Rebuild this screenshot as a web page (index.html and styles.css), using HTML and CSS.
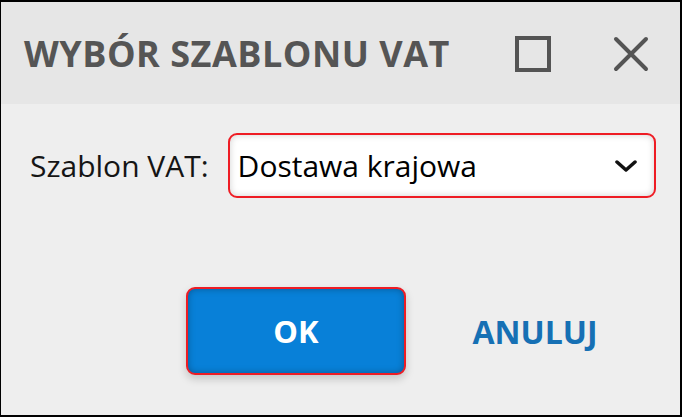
FILE: index.html
```html
<!DOCTYPE html>
<html lang="pl">
<head>
  <meta charset="UTF-8" />
  <meta name="viewport" content="width=device-width, initial-scale=1.0" />
  <title>Wybór szablonu VAT</title>
  <link rel="stylesheet" href="styles.css">
</head>
<body>
  <div class="dialog">
    <header class="dialog-header">
      <h1>WYBÓR SZABLONU VAT</h1>
      <div class="window-buttons">
        <button class="icon-btn" title="Maksymalizuj">
          <svg width="40" height="40" viewBox="0 0 40 40">
            <rect x="4" y="4" width="32" height="32" fill="none" stroke="#545454" stroke-width="4"/>
          </svg>
        </button>
        <button class="icon-btn" title="Zamknij">
          <svg width="40" height="40" viewBox="0 0 40 40">
            <path d="M5 5 L35 35 M35 5 L5 35" stroke="#545454" stroke-width="4" stroke-linecap="round"/>
          </svg>
        </button>
      </div>
    </header>

    <main class="dialog-body">
      <div class="field">
        <label>Szablon VAT:</label>
        <div class="select">
          <span>Dostawa krajowa</span>
          <svg width="22" height="12" viewBox="0 0 22 12">
            <path d="M2 2 L11 10 L20 2" fill="none" stroke="#111" stroke-width="3.5" stroke-linecap="round" stroke-linejoin="round"/>
          </svg>
        </div>
      </div>

      <div class="actions">
        <button class="btn btn-primary">OK</button>
        <button class="btn btn-flat">ANULUJ</button>
      </div>
    </main>
  </div>
</body>
</html>
```

FILE: styles.css
```css
* {
  box-sizing: border-box;
}

body {
  margin: 0;
  font-family: "Open Sans", "Noto Sans", sans-serif;
  background-color: #eeeeee;
}

.dialog {
  width: 682px;
  height: 417px;
  border: 2px solid #000;
  border-left-width: 1px;
  background-color: #eeeeee;
  display: flex;
  flex-direction: column;
}

.dialog-header {
  height: 102px;
  background-color: #e6e6e6;
  display: flex;
  align-items: center;
  justify-content: space-between;
  padding: 2px 29px 0 23px;
}

.dialog-header h1 {
  margin: 0 0 2px 0;
  font-size: 36px;
  font-weight: 700;
  color: #555555;
  letter-spacing: 0.5px;
}

.window-buttons {
  display: flex;
  gap: 58px;
}

.icon-btn {
  border: none;
  background: none;
  padding: 0;
  width: 40px;
  height: 40px;
}

.dialog-body {
  flex: 1;
  padding: 29px 24px 0 29px;
}

.field {
  display: flex;
  align-items: center;
  gap: 19px;
}

.field label {
  font-size: 30px;
  color: #151515;
}

.select {
  flex: 1;
  height: 65px;
  background-color: #ffffff;
  border: 2px solid #ee1c24;
  border-radius: 9px;
  box-shadow: inset 0 0 7px rgba(0, 0, 0, 0.18);
  display: flex;
  align-items: center;
  justify-content: space-between;
  padding: 0 17px 0 8px;
  font-size: 30px;
  color: #000;
}

.actions {
  display: flex;
  justify-content: flex-end;
  gap: 19px;
  margin-top: 89px;
  padding-right: 11px;
}

.btn {
  width: 220px;
  height: 88px;
  font-family: "Open Sans", "Noto Sans", sans-serif;
  font-size: 31px;
  font-weight: 700;
  border-radius: 9px;
  cursor: pointer;
}

.btn-primary {
  background-color: #0880d8;
  color: #ffffff;
  border: 2px solid #ee1c24;
  box-shadow: inset 0 0 7px rgba(0, 0, 0, 0.3), 0 4px 8px rgba(0, 0, 0, 0.18);
}

.btn-flat {
  background: none;
  border: none;
  font-size: 32px;
  color: #1670b4;
}
```
